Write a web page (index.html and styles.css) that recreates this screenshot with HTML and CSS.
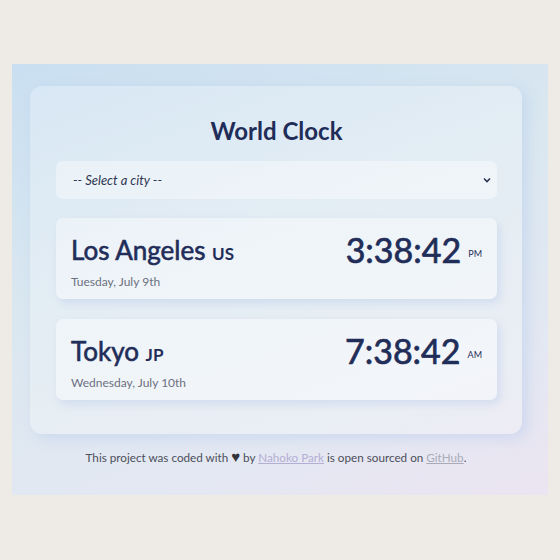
FILE: index.html
```html
<!DOCTYPE html>
<html>
<head>
<meta charset="utf-8">
<link rel="stylesheet" href="styles.css">
</head>
<body>
<div class="panel">
  <div class="card">
    <h1 class="title">World Clock</h1>
    <div class="select">
      <span class="select-label">-- Select a city --</span>
      <svg class="chev" width="8" height="6" viewBox="0 0 8 6"><path d="M1 1.5 L4 4.5 L7 1.5" fill="none" stroke="#2a3350" stroke-width="1.6"/></svg>
    </div>
    <div class="city">
      <div class="city-left">
        <div class="city-name">Los Angeles <span class="cc">us</span></div>
        <div class="city-date">Tuesday, July 9th</div>
      </div>
      <div class="time"><span class="digits">3:38:42</span><span class="ampm">PM</span></div>
    </div>
    <div class="city">
      <div class="city-left">
        <div class="city-name">Tokyo <span class="cc">jp</span></div>
        <div class="city-date">Wednesday, July 10th</div>
      </div>
      <div class="time"><span class="digits">7:38:42</span><span class="ampm">AM</span></div>
    </div>
  </div>
  <p class="footer">This project was coded with <span class="heart">&#9829;</span> by <a href="#" class="link-a">Nahoko Park</a> is open sourced on <a href="#" class="link-b">GitHub</a>.</p>
</div>
</body>
</html>
```
FILE: styles.css
```css
html, body {
  margin: 0;
  padding: 0;
}
body {
  background: #eeeae6;
  font-family: Lato, "Open Sans", sans-serif;
  width: 560px;
  height: 560px;
  padding-top: 64px;
  box-sizing: border-box;
}
.panel {
  margin: 0 12px;
  height: 431px;
  box-sizing: border-box;
  padding: 22px 26px 0 18px;
  background: linear-gradient(160deg, #c9dff1 0%, #dae7f0 40%, #e3e8f2 75%, #ebe4f1 100%);
}
.card {
  background: rgba(255, 255, 255, 0.25);
  border-radius: 12px;
  box-shadow: 5px 4px 14px rgba(170, 195, 235, 0.4);
  padding: 30px 25px 33px 26px;
  height: 348px;
  box-sizing: border-box;
}
.title {
  margin: 0 0 15px;
  text-align: center;
  font-size: 24px;
  font-weight: 700;
  color: #1f2d58;
  line-height: 30px;
}
.select {
  height: 38px;
  border-radius: 7px;
  background: rgba(255, 255, 255, 0.4);
  display: flex;
  align-items: center;
  justify-content: space-between;
  padding: 0 6px 0 17px;
  margin-bottom: 19px;
}
.select-label {
  font-style: italic;
  font-size: 13px;
  color: #2e3652;
}
.city {
  height: 81px;
  box-sizing: border-box;
  border-radius: 7px;
  background: rgba(255, 255, 255, 0.4);
  box-shadow: 3px 4px 8px rgba(175, 195, 230, 0.4);
  display: flex;
  justify-content: space-between;
  align-items: flex-start;
  padding: 14px 15px 0 15px;
  margin-bottom: 20px;
}
.city-name {
  font-size: 26px;
  font-weight: 400;
  -webkit-text-stroke: 0.6px #1f2d58;
  color: #1f2d58;
  line-height: 36px;
}
.cc {
  font-variant: small-caps;
  font-weight: 700;
  font-size: 24px;
  -webkit-text-stroke: 0;
}
.city-date {
  margin-top: 5px;
  font-size: 12px;
  color: #6c7080;
}
.time {
  display: flex;
  align-items: baseline;
  color: #1f2d58;
  line-height: 36px;
}
.digits {
  font-size: 34px;
  font-weight: 400;
  -webkit-text-stroke: 0.7px #1f2d58;
}
.ampm {
  font-size: 9px;
  margin-left: 7px;
  position: relative;
  top: -6px;
}
.footer {
  margin: 15px 0 0 0;
  text-align: center;
  font-size: 11.7px;
  color: #4c4f5a;
}
.heart {
  color: #33333b;
  font-size: 15px;
  line-height: 1;
}
.link-a {
  color: #b4aed5;
}
.link-b {
  color: #a9acb8;
}
```
